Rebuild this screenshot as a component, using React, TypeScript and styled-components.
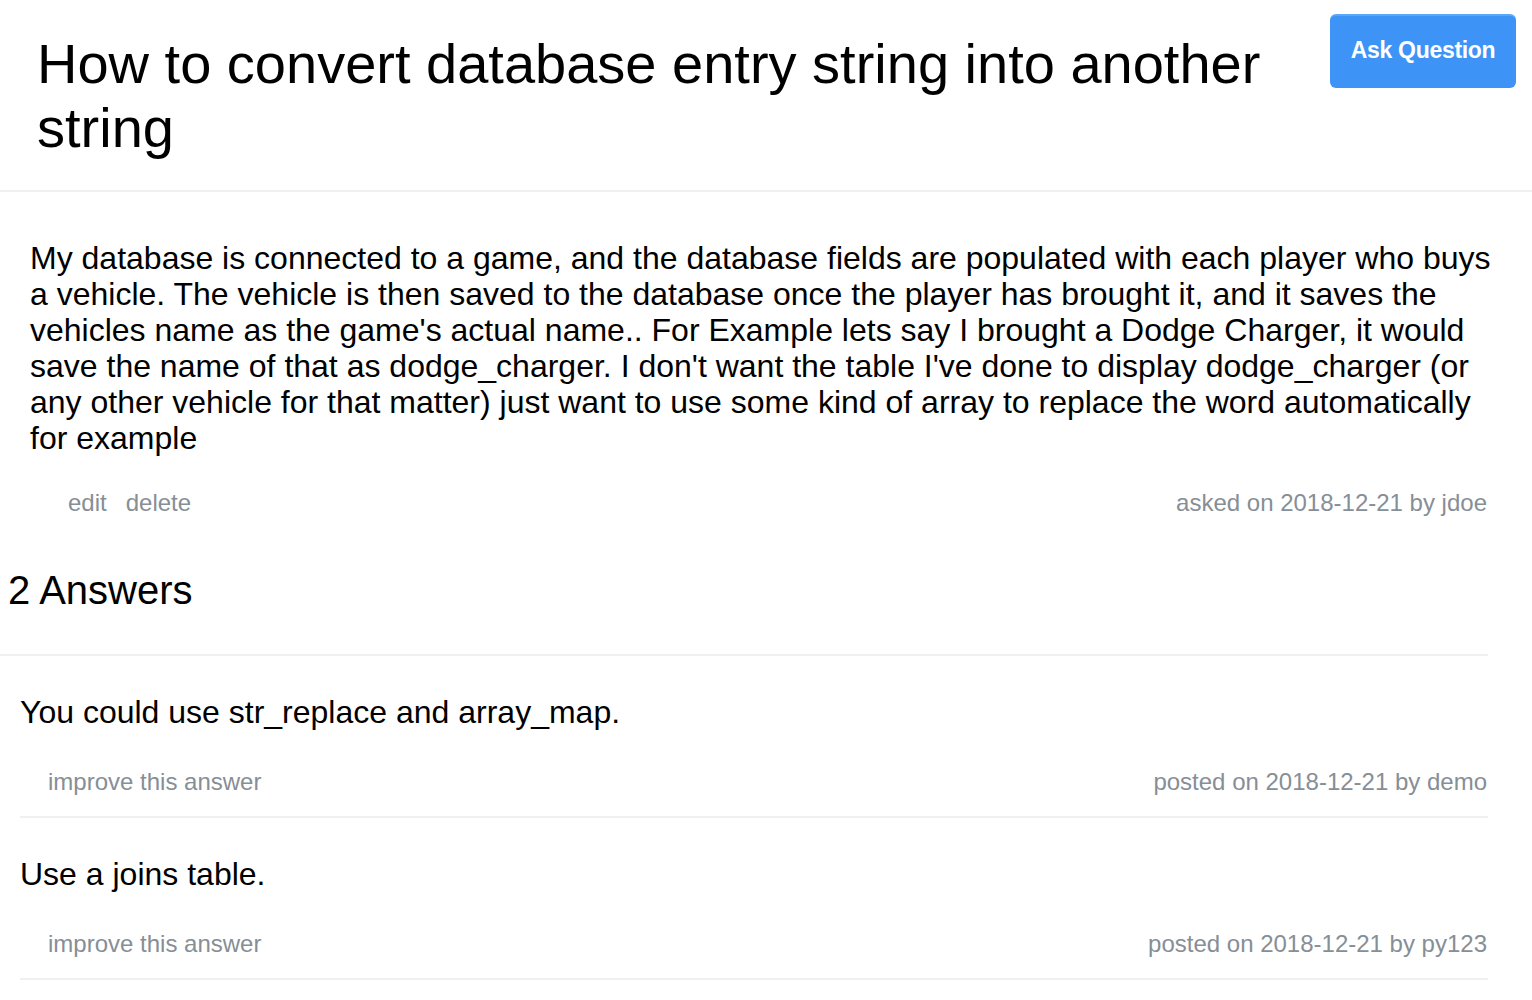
import React from "react";
import styled, { createGlobalStyle } from "styled-components";

const Global = createGlobalStyle`
  html, body { margin: 0; padding: 0; background: #fff; }
  body { font-family: "Liberation Sans", Arial, Helvetica, sans-serif; color: #000; }
  * { box-sizing: border-box; }
`;

const Page = styled.div`
  width: 1532px;
`;

const Header = styled.header`
  display: flex;
  justify-content: space-between;
  align-items: flex-start;
  gap: 40px;
  padding: 14px 16px 0 37px;
  height: 192px;
  border-bottom: 2px solid #f0f0f0;
`;

const Title = styled.h1`
  margin: 18px 0 0;
  font-size: 56px;
  line-height: 64px;
  font-weight: 400;
`;

const AskButton = styled.button`
  flex: none;
  width: 186px;
  height: 74px;
  padding: 0 0 4px;
  border: none;
  border-top: 2px solid #5aa6f7;
  border-radius: 6px;
  background: #3d94f6;
  color: #fff;
  font-family: inherit;
  font-size: 23px;
  font-weight: 700;
  letter-spacing: -0.3px;
`;

const Question = styled.section`
  padding: 48px 30px 0 30px;
`;

const Body = styled.p`
  margin: 0;
  font-size: 32px;
  line-height: 36px;
`;

const MetaRow = styled.div<{ $indent: number }>`
  display: flex;
  justify-content: space-between;
  padding: 0 15px 0 ${(p) => p.$indent}px;
  color: #868e96;
  font-size: 24px;
  line-height: 30px;
`;

const Links = styled.div`
  display: flex;
  gap: 19px;
`;

const QuestionMeta = styled(MetaRow)`
  margin-top: 32px;
`;

const AnswersHeading = styled.h2`
  margin: 0;
  padding: 50px 0 42px 8px;
  font-size: 40px;
  line-height: 44px;
  font-weight: 400;
  width: 1488px;
  border-bottom: 2px solid #f0f0f0;
`;

const AnswerList = styled.div`
  width: 1488px;
  padding-left: 20px;
`;

const Answer = styled.article`
  border-bottom: 2px solid #f0f0f0;
  padding: 38px 0 19px;
`;

const AnswerText = styled.p`
  margin: 0 0 37px;
  font-size: 32px;
  line-height: 36px;
`;

const AnswerMeta = styled(MetaRow)`
  padding-right: 1px;
`;

const answers = [
  { text: "You could use str_replace and array_map.", by: "demo" },
  { text: "Use a joins table.", by: "py123" },
];

export default function App() {
  return (
    <Page>
      <Global />
      <Header>
        <Title>How to convert database entry string into another string</Title>
        <AskButton>Ask Question</AskButton>
      </Header>
      <Question>
        <Body>
          My database is connected to a game, and the database fields are populated with each player who buys a
          vehicle. The vehicle is then saved to the database once the player has brought it, and it saves the
          vehicles name as the game's actual name.. For Example lets say I brought a Dodge Charger, it would save
          the name of that as dodge_charger. I don't want the table I've done to display dodge_charger (or any
          other vehicle for that matter) just want to use some kind of array to replace the word automatically for
          example
        </Body>
        <QuestionMeta $indent={38}>
          <Links>
            <span>edit</span>
            <span>delete</span>
          </Links>
          <span>asked on 2018-12-21 by jdoe</span>
        </QuestionMeta>
      </Question>
      <AnswersHeading>2 Answers</AnswersHeading>
      <AnswerList>
        {answers.map((a) => (
          <Answer key={a.by}>
            <AnswerText>{a.text}</AnswerText>
            <AnswerMeta $indent={28}>
              <span>improve this answer</span>
              <span>posted on 2018-12-21 by {a.by}</span>
            </AnswerMeta>
          </Answer>
        ))}
      </AnswerList>
    </Page>
  );
}
